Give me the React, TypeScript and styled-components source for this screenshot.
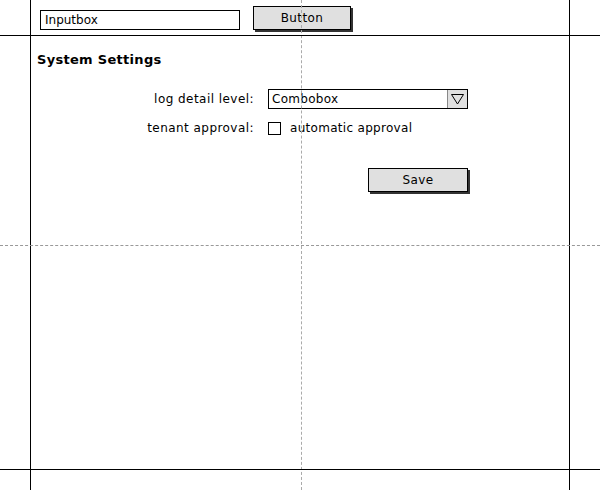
import styled, { createGlobalStyle } from "styled-components";

const GlobalStyle = createGlobalStyle`
  html, body {
    margin: 0;
    padding: 0;
    background: #fff;
  }
  body {
    font-family: "DejaVu Sans", Verdana, sans-serif;
    font-size: 12px;
    color: #000;
  }
`;

const Page = styled.div`
  position: relative;
  width: 600px;
  height: 490px;
  overflow: hidden;
  background: #fff;
`;

const TopBar = styled.div`
  display: flex;
  align-items: flex-start;
  gap: 13px;
  padding: 6px 0 0 40px;
  height: 29px;
`;

const InputBox = styled.div`
  box-sizing: border-box;
  width: 200px;
  height: 20px;
  margin-top: 4px;
  border: 1px solid #000;
  padding: 0 4px;
  line-height: 18px;
  font-size: 12px;
  background: #fff;
`;

interface IButton {
  $width: number;
}
const Button = styled.div<IButton>`
  box-sizing: border-box;
  width: ${(props) => props.$width}px;
  height: 24px;
  border: 1px solid #000;
  background: #e0e0e0;
  box-shadow: 2px 2px 0 #333;
  text-align: center;
  line-height: 22px;
  font-size: 12px;
  letter-spacing: 0.4px;
`;

const Content = styled.div`
  padding: 15px 0 0 37px;
`;

const Heading = styled.div`
  font-weight: bold;
  font-size: 13px;
  letter-spacing: 0.3px;
  height: 20px;
  line-height: 20px;
`;

const Form = styled.div`
  display: grid;
  grid-template-columns: 217px 200px;
  grid-auto-rows: 20px;
  column-gap: 14px;
  row-gap: 9px;
  margin-top: 19px;
  align-items: center;
`;

const Label = styled.div`
  text-align: right;
  font-size: 12px;
  letter-spacing: 0.45px;
`;

const Combo = styled.div`
  box-sizing: border-box;
  display: flex;
  height: 20px;
  border: 1px solid #000;
  background: #fff;
`;

const ComboText = styled.div`
  flex: 1;
  padding: 0 3px;
  line-height: 18px;
  font-size: 12px;
  letter-spacing: 0.3px;
`;

const ComboArrow = styled.div`
  width: 19px;
  height: 18px;
  background: #e0e0e0;
  border-left: 1px solid #888;
  display: flex;
  align-items: center;
  justify-content: center;
`;

const CheckRow = styled.div`
  display: flex;
  align-items: center;
  gap: 9px;
  font-size: 12px;
  letter-spacing: 0.3px;
`;

const CheckBox = styled.div`
  box-sizing: border-box;
  width: 13px;
  height: 13px;
  border: 1px solid #000;
  background: #fff;
`;

const Actions = styled.div`
  grid-column: 2;
  display: flex;
  justify-content: flex-end;
  align-self: start;
  margin-top: 21px;
`;

interface ILine {
  $dashed?: boolean;
  $pos: number;
}
const VLine = styled.div<ILine>`
  position: absolute;
  top: 0;
  bottom: 0;
  left: ${(props) => props.$pos}px;
  width: 0;
  border-left: 1px ${(props) => (props.$dashed ? "dashed #aaa" : "solid #000")};
`;
const HLine = styled.div<ILine>`
  position: absolute;
  left: 0;
  right: 0;
  top: ${(props) => props.$pos}px;
  height: 0;
  border-top: 1px ${(props) => (props.$dashed ? "dashed #999" : "solid #000")};
`;

const App = () => {
  return (
    <Page>
      <GlobalStyle />
      <TopBar>
        <InputBox>Inputbox</InputBox>
        <Button $width={98}>Button</Button>
      </TopBar>
      <Content>
        <Heading>System Settings</Heading>
        <Form>
          <Label>log detail level:</Label>
          <Combo>
            <ComboText>Combobox</ComboText>
            <ComboArrow>
              <svg width="13" height="12" viewBox="0 0 13 12">
                <path d="M0.5 1.5 H12.5 L6.5 11 Z" fill="none" stroke="#000" strokeWidth="1" />
              </svg>
            </ComboArrow>
          </Combo>
          <Label>tenant approval:</Label>
          <CheckRow>
            <CheckBox />
            automatic approval
          </CheckRow>
          <Actions>
            <Button $width={100}>Save</Button>
          </Actions>
        </Form>
      </Content>
      <VLine $pos={30} />
      <VLine $pos={569} />
      <VLine $pos={301} $dashed />
      <HLine $pos={35} />
      <HLine $pos={469} />
      <HLine $pos={245} $dashed />
    </Page>
  );
};

export default App;
